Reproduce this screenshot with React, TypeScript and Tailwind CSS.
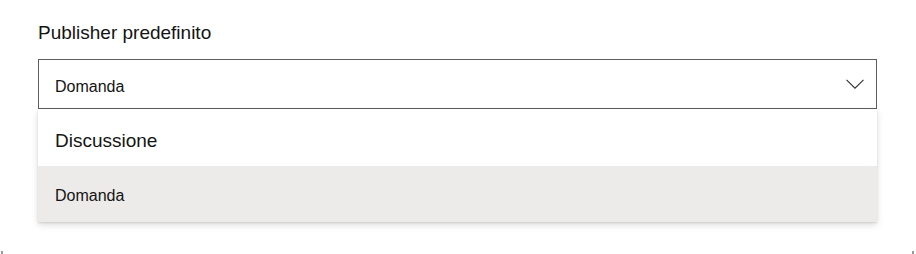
import React from "react";

export default function App() {
  return (
    <div className="relative w-[916px] h-[254px] bg-white overflow-hidden" style={{ fontFamily: '"Liberation Sans", Arial, sans-serif' }}>
      <div className="pl-[38px] pt-[20px] w-[877px]">
        <div className="text-[19px] leading-[26px] text-[#141414]">Publisher predefinito</div>
        <div className="mt-[13px] h-[50px] border border-[#605e5c] flex items-center justify-between pl-[16px] pr-[12px]">
          <span className="text-[16px] pt-[5px] text-[#141414]">Domanda</span>
          <svg width="18" height="10" viewBox="0 0 18 10" fill="none">
            <path d="M0.5 0.8 L9 9.2 L17.5 0.8" stroke="#323130" strokeWidth="1.1" />
          </svg>
        </div>
        <div className="bg-white shadow-[0_3.2px_7.2px_rgba(0,0,0,0.132),0_0.6px_1.8px_rgba(0,0,0,0.108)]">
          <div className="h-[57px] flex items-center pl-[17px] pt-[8px] text-[19px] text-[#141414]">Discussione</div>
          <div className="h-[56px] flex items-center pl-[17px] pt-[3px] bg-[#edebe9] text-[16px] text-[#141414]">Domanda</div>
        </div>
      </div>
      <span className="absolute left-[1px] top-[251px] w-[2px] h-[3px] bg-[#9a9a9a]" />
      <span className="absolute left-[912px] top-[251px] w-[2px] h-[3px] bg-[#9a9a9a]" />
    </div>
  );
}
